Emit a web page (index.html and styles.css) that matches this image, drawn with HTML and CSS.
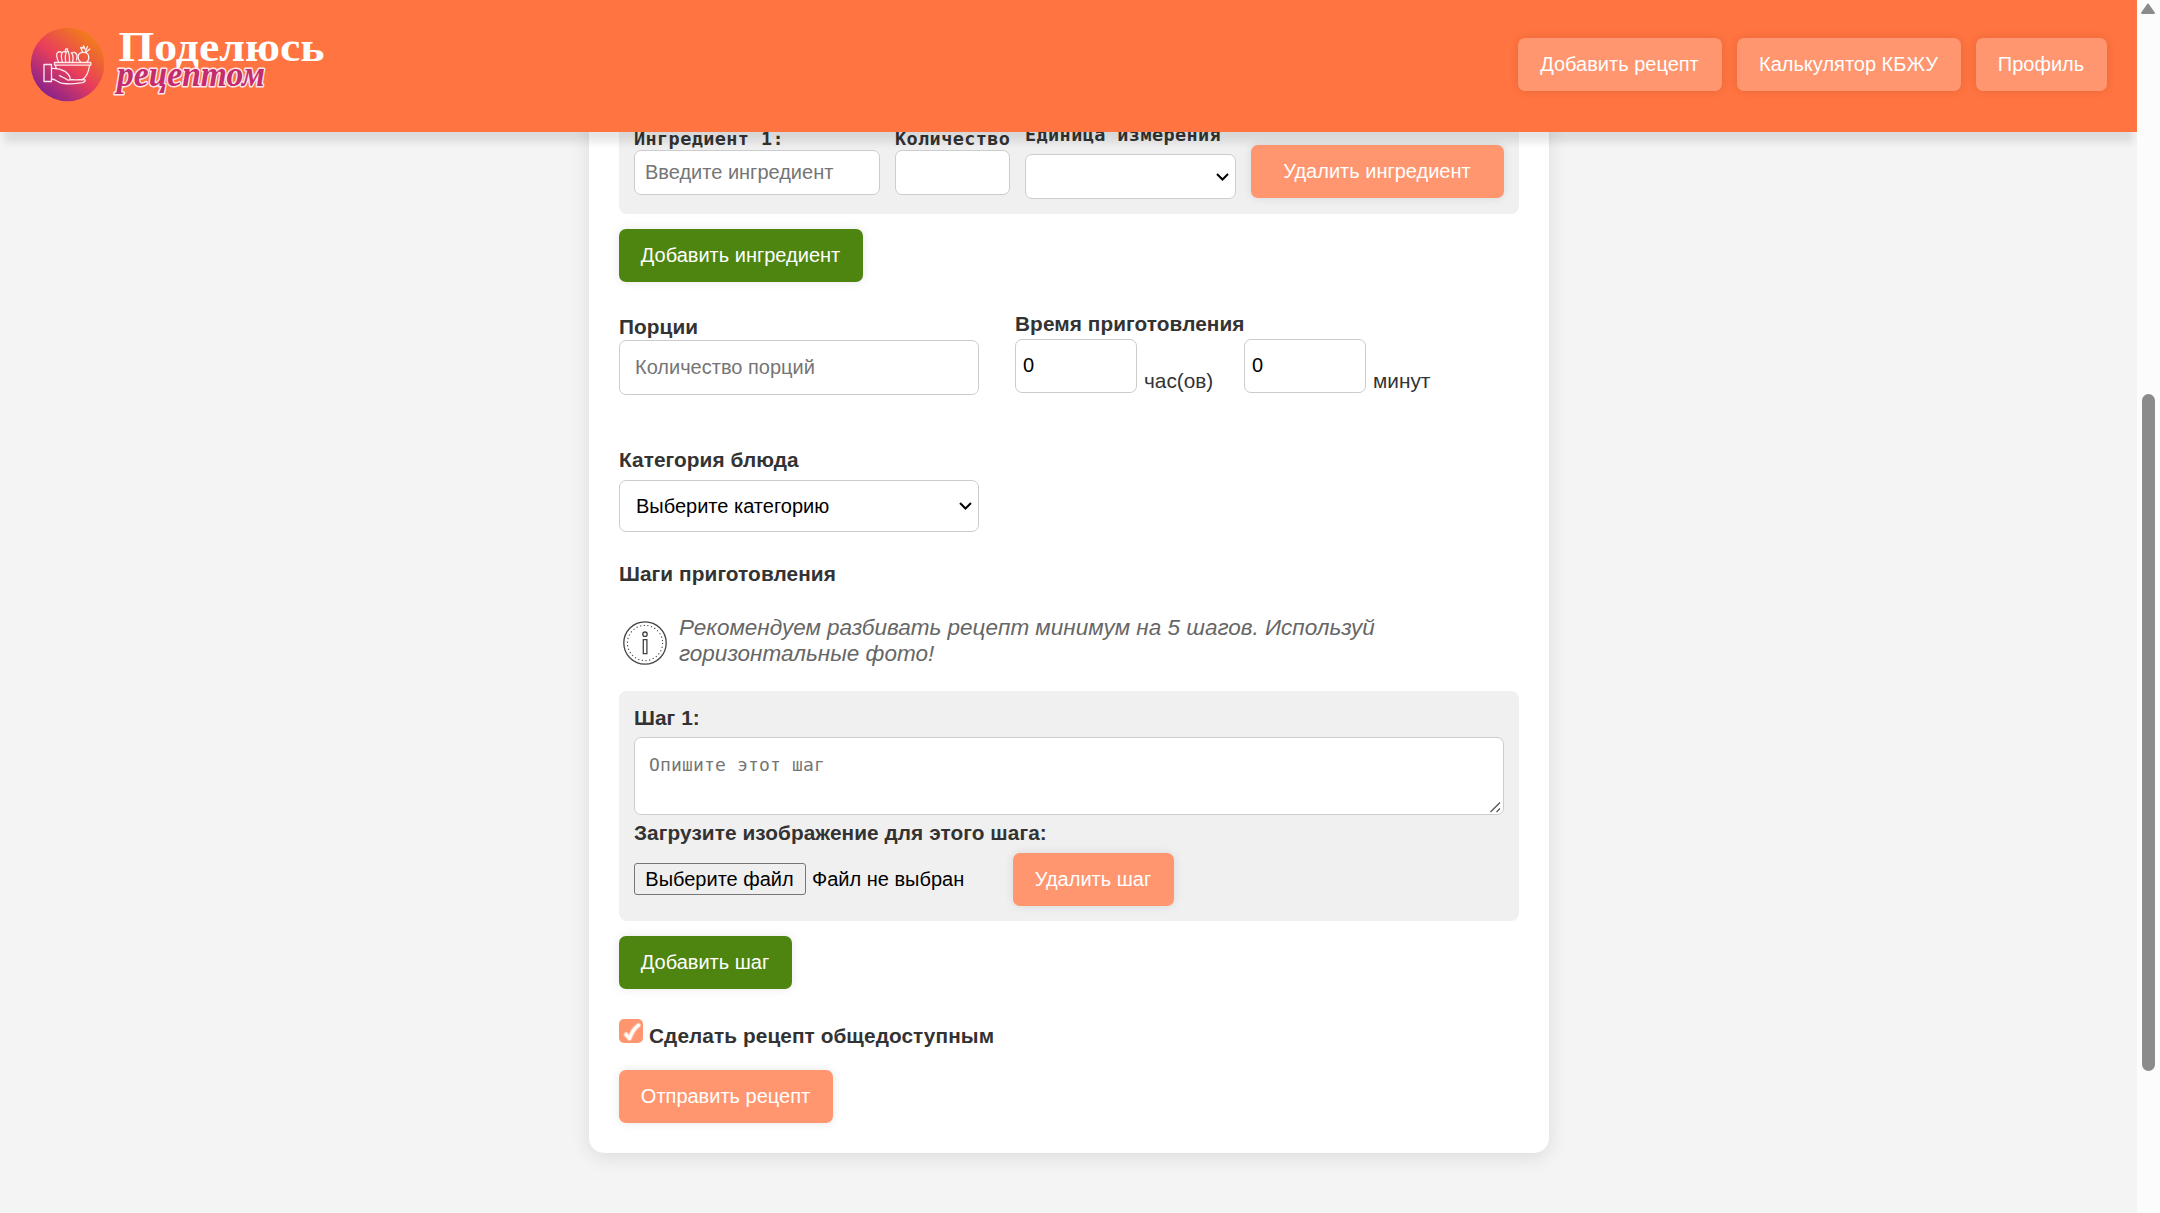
FILE: index.html
```html
<!DOCTYPE html>
<html lang="ru">
<head>
<meta charset="utf-8">
<title>Поделюсь рецептом</title>
<link rel="stylesheet" href="styles.css">
</head>
<body>
<div class="page">
  <header class="header">
    <svg class="logo" width="310" height="90" viewBox="25 20 310 90">
      <defs>
        <linearGradient id="disc" x1="0.15" y1="0.9" x2="0.8" y2="0.1">
          <stop offset="0" stop-color="#85218d"/>
          <stop offset="0.5" stop-color="#e83e5b"/>
          <stop offset="1" stop-color="#f17c1c"/>
        </linearGradient>
      </defs>
      <circle cx="67.500" cy="64.500" r="36.800" fill="url(#disc)"/>
      <g fill="none" stroke="#ffe9ee" stroke-width="1.300" stroke-linejoin="round" stroke-linecap="round">
        <path d="M44 64.500h7.500v17H44zM54.500 62.500h36.300v2.700H54.500zM55.500 65.500l.6 3M89.500 65.500c-.8 7-3 11.500-7.500 14.500"/>
        <path d="M51.500 68.500c6-.4 9 .2 13 2.600 3 2.200 5.500 4.500 5.600 7.500.2 1.800-2.200 2-4 .4-2.300-1.600-4.600-2-6.600-3.600M51.500 79c4.500 0 6 3.800 11 4.300 7 .8 15 .4 20-.6 1.500-.4 2.800-1.400 2.600-2.800M70 79.500c5 .6 9 .4 14 0"/>
        <path d="M58.500 62c-1.600-4-2.500-8-1-9.500 1.700-1.200 3.500-.6 4.500 0M62.300 62c-1-4-1.600-8 .2-9.800 1.200-.8 2.500-.5 3.200.2M65.700 62c-.6-4-.4-8 .8-10.500M69.500 62c.3-4 .2-7-1.200-10.500M72.500 62c1-4 1-7-1.200-9.300M76.500 60c1.400-4 .4-7-2-7.500-1-.2-2 0-2.800.7M65 52l.8-3h1.700v2.600"/>
        <path d="M80.500 62c-4-4-3-9.500 2.700-9.700 6-.2 7 5.700 3.800 9.700M82.500 52l-1.800-4.500 2.500.7.300-2.500 1.600 3.600M85.500 51.500l2-5M86.500 51.800l3.300-2.800"/>
      </g>
      <text class="logo-top" x="118.500" y="61" textLength="206" lengthAdjust="spacingAndGlyphs">Поделюсь</text>
      <text class="logo-bottom" x="117" y="86" textLength="148" lengthAdjust="spacingAndGlyphs">рецептом</text>
    </svg>
    <nav class="nav">
      <button class="btn nav-add">Добавить рецепт</button>
      <button class="btn nav-calc">Калькулятор КБЖУ</button>
      <button class="btn nav-profile">Профиль</button>
    </nav>
  </header>

  <main class="card">
    <section class="panel ingredients">
      <div class="col col-name">
        <label class="mono-label">Ингредиент 1:</label>
        <input class="field small-field" placeholder="Введите ингредиент">
      </div>
      <div class="col col-amount">
        <label class="mono-label">Количество</label>
        <input class="field small-field">
      </div>
      <div class="col col-unit">
        <label class="mono-label unit-label">Единица измерения</label>
        <div class="field select small-field"><span></span><svg class="chevron" width="15" height="10" viewBox="0 0 15 10"><path d="M2 2l5.500 5.500L13 2"/></svg></div>
      </div>
      <button class="btn remove-ingredient">Удалить ингредиент</button>
    </section>
    <button class="btn green add-ingredient">Добавить ингредиент</button>

    <section class="meta">
      <div class="portions">
        <label class="label">Порции</label>
        <input class="field portions-field" placeholder="Количество порций">
      </div>
      <div class="time">
        <label class="label">Время приготовления</label>
        <div class="time-row">
          <input class="field time-field" value="0"><span class="hours">час(ов)</span>
          <input class="field time-field" value="0"><span class="minutes">минут</span>
        </div>
      </div>
    </section>

    <label class="label category-label">Категория блюда</label>
    <div class="field select category"><span>Выберите категорию</span><svg class="chevron" width="15" height="10" viewBox="0 0 15 10"><path d="M2 2l5.500 5.500L13 2"/></svg></div>

    <label class="label steps-label">Шаги приготовления</label>
    <div class="tip">
      <svg width="46" height="46" viewBox="0 0 46 46" fill="none" stroke="#444">
        <circle cx="23" cy="23" r="21.200" stroke-width="1.300"/>
        <circle cx="23" cy="23" r="17.600" stroke-width="1.100" stroke-dasharray="1.200 2.486"/>
        <circle cx="23" cy="14.200" r="2.200" stroke-width="1.300"/>
        <path d="M21.300 19.700h3.600v14h-3.600z" stroke-width="1.300"/>
      </svg>
      <p class="tip-text">Рекомендуем разбивать рецепт минимум на 5 шагов. Используй<br>горизонтальные фото!</p>
    </div>

    <section class="panel step">
      <label class="label">Шаг 1:</label>
      <div class="area">
        <textarea class="field step-text" placeholder="Опишите этот шаг"></textarea>
        <svg class="grip" width="13" height="13" viewBox="0 0 13 13"><path d="M1.500 11L11 1.500M7.500 11L11 7.500"/></svg>
      </div>
      <label class="label upload-label">Загрузите изображение для этого шага:</label>
      <div class="file-row">
        <span class="file-btn">Выберите файл</span>
        <span class="file-name">Файл не выбран</span>
        <button class="btn remove-step">Удалить шаг</button>
      </div>
    </section>
    <button class="btn green add-step">Добавить шаг</button>

    <div class="public">
      <svg width="24" height="24" viewBox="0 0 24 24">
        <rect width="24" height="24" rx="5" fill="#ff966f"/>
        <path d="M7 15.500l3.600 4C12.500 14 15 9.500 19.500 6.300" fill="none" stroke="#ffc9b4" stroke-width="5" stroke-linecap="round" stroke-linejoin="round"/>
        <path d="M7 15.500l3.600 4C12.500 14 15 9.500 19.500 6.300" fill="none" stroke="#fff" stroke-width="3" stroke-linecap="round" stroke-linejoin="round"/>
      </svg>
      <label class="label">Сделать рецепт общедоступным</label>
    </div>
    <button class="btn submit">Отправить рецепт</button>
  </main>
</div>
<aside class="scrollbar">
  <svg width="16" height="12" viewBox="0 0 16 12"><path d="M8 1.500L14 10H2z" fill="#8b8b8b" stroke="#8b8b8b" stroke-width="2" stroke-linejoin="round"/></svg>
  <div class="thumb"></div>
</aside>
</body>
</html>
```
FILE: styles.css
```css
* { box-sizing: border-box; }
body {
  margin: 0;
  height: 1213px;
  display: flex;
  overflow: hidden;
  background: #f4f4f4;
  color: #333;
  font: 20px/24px "Liberation Sans", Arial, sans-serif;
}
.page { flex: 1; height: 1213px; overflow: hidden; }
.header {
  position: relative;
  z-index: 2;
  height: 132px;
  padding: 20px 30px 0 25px;
  display: flex;
  justify-content: space-between;
  background: #ff7440;
  box-shadow: 0 14px 8px -4px rgba(0, 0, 0, .1);
}
.logo { display: block; }
.logo-top { font: bold 43px "Liberation Serif", serif; fill: #fff; }
.logo-bottom {
  font: italic bold 36px "Liberation Serif", serif;
  fill: #c42d6c;
  stroke: #ffe6ee;
  stroke-width: 3px;
  stroke-linejoin: round;
  paint-order: stroke;
}
.nav { display: flex; gap: 15px; padding-top: 18px; }
.btn {
  display: block;
  height: 53px;
  padding: 0 1px 2px 0;
  border: 0;
  border-radius: 7px;
  background: #ff966f;
  color: #fff;
  font: 20px/24px "Liberation Sans", Arial, sans-serif;
  white-space: nowrap;
  box-shadow: 0 0 10px rgba(0, 0, 0, .1);
}
.green { background: #4d8510; }
.nav-add { width: 204px; }
.nav-calc { width: 224px; }
.nav-profile { width: 131px; }

.card {
  width: 960px;
  height: 1081px;
  margin: -60px 0 0 589px;
  padding: 28px 30px 30px;
  border-radius: 15px;
  background: #fff;
  box-shadow: 0 4px 20px rgba(0, 0, 0, .1);
}
.panel { border-radius: 8px; background: #f0f0f0; }
.ingredients {
  height: 114px;
  display: flex;
  gap: 15px;
  padding: 0 15px;
  align-items: flex-start;
}
.col { display: flex; flex-direction: column; padding-top: 27px; }
.col-name { width: 246px; }
.col-amount { width: 115px; }
.col-unit { width: 211px; padding-top: 23px; }
.mono-label {
  height: 23px;
  font: bold 18.500px/24px "DejaVu Sans Mono", monospace;
  letter-spacing: .4px;
  white-space: nowrap;
}
.unit-label { margin-bottom: 8px; }
.field {
  display: block;
  width: 100%;
  margin: 0;
  border: 1px solid #ccc;
  border-radius: 7px;
  background: #fff;
  color: #000;
  font: 20px/24px "Liberation Sans", Arial, sans-serif;
}
.field::placeholder { color: #757575; opacity: 1; }
.small-field { height: 45px; padding: 0 10px; }
.select { display: flex; align-items: center; justify-content: space-between; padding: 0 5px 0 16px; }
.chevron { fill: none; stroke: #000; stroke-width: 2; }
.remove-ingredient { width: 253px; margin-top: 45px; }
.add-ingredient { width: 244px; margin-top: 15px; }

.label {
  display: block;
  font-weight: bold;
  font-size: 20.800px;
  letter-spacing: .08px;
  white-space: nowrap;
}
.meta { display: flex; gap: 36px; margin-top: 30px; height: 136px; }
.portions { width: 360px; padding-top: 3px; }
.portions-field { height: 55px; margin-top: 1px; padding: 0 15px; }
.time-row { display: flex; margin-top: 3px; }
.time-field { width: 122px; height: 54px; padding: 0 7px 2px; }
.hours, .minutes { font-size: 20.800px; }
.hours { width: 107px; padding: 30px 0 0 7px; }
.minutes { padding: 30px 0 0 7px; }
.category-label { height: 32px; }
.category { width: 360px; height: 52px; }
.steps-label { margin-top: 30px; }
.tip { display: flex; gap: 11px; margin-top: 29px; height: 76px; padding-left: 3px; }
.tip svg { margin-top: 5px; }
.tip-text { margin: 0; color: #666; font-style: italic; font-size: 22.500px; line-height: 26px; white-space: nowrap; }

.step { height: 230px; padding: 15px; }
.area { position: relative; margin-top: 7px; height: 78px; }
.step-text {
  height: 78px;
  padding: 15px 14px;
  resize: none;
  font: 18px/24px "DejaVu Sans Mono", monospace;
  letter-spacing: .16px;
}
.grip { position: absolute; right: 2px; bottom: 1px; fill: none; stroke: #555; stroke-width: 1.300; }
.upload-label { margin-top: 6px; }
.file-row { display: flex; align-items: center; margin-top: 8px; color: #000; white-space: nowrap; }
.file-btn {
  width: 172px;
  height: 32px;
  margin-top: -1px;
  padding-right: 1px;
  border: 1px solid #767676;
  border-radius: 3px;
  background: #efefef;
  line-height: 30px;
  text-align: center;
}
.file-name { width: 207px; margin-top: -2px; padding-left: 6px; }
.remove-step { width: 161px; }
.add-step { width: 173px; margin-top: 15px; }
.public { display: flex; gap: 6px; margin-top: 30px; height: 51px; }
.public .label { padding-top: 5px; }
.submit { width: 214px; }

.scrollbar { width: 23px; padding: 3px 0 0 3px; background: #fcfcfc; }
.scrollbar svg { display: block; }
.thumb { width: 13px; height: 677px; margin: 379px 0 0 2px; border-radius: 7px; background: #8b8b8b; }
```
